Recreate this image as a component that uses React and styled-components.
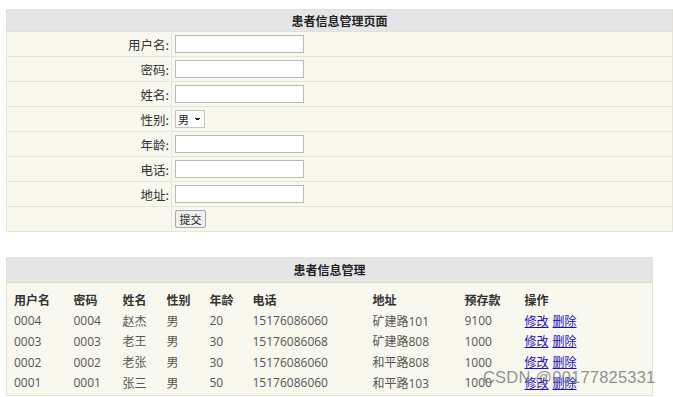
import React from "react";
import styled, { createGlobalStyle } from "styled-components";

const Global = createGlobalStyle`
  html, body { margin: 0; padding: 0; background: #fff; }
  body { font-family: "Open Sans", "Noto Sans CJK SC", sans-serif; font-size: 12px; color: #333; }
`;

const Page = styled.div`
  position: relative;
  width: 673px;
  height: 397px;
  overflow: hidden;
  padding: 9px 0 0 6px;
  box-sizing: border-box;
`;

const FormTable = styled.table`
  width: 667px;
  border-collapse: collapse;
  border: 1px solid #e2e2d2;
  background: #f8f8ee;
  table-layout: fixed;
`;

const TitleCell = styled.th`
  height: 21px;
  padding: 0;
  background: #e5e5e7;
  border: 1px solid #e2e2d2;
  font-family: "Noto Sans CJK SC", sans-serif;
  font-weight: bold;
  font-size: 12px;
  color: #222;
  text-align: center;
`;

const FormRow = styled.tr`
  height: 25px;
`;

const LabelCell = styled.td`
  padding: 0 2px 0 0;
  border: 1px solid #e6e6d6;
  text-align: right;
  font-family: "Noto Sans CJK SC", sans-serif;
  font-size: 12.5px;
  color: #333;
`;

const FieldCell = styled.td`
  padding: 0 0 0 3px;
  border: 1px solid #e6e6d6;
  vertical-align: middle;
`;

const TextInput = styled.input`
  display: block;
  width: 129px;
  height: 18px;
  box-sizing: border-box;
  margin: 0;
  padding: 0 2px;
  border: 1px solid #b9b9b9;
  background: #fff;
  font-size: 12px;
`;

const Select = styled.select`
  display: block;
  height: 18px;
  width: 30px;
  box-sizing: border-box;
  margin: 0;
  padding: 0 0 0 2px;
  border: 1px solid #c4c4c4;
  background: #fff;
  font-family: "Noto Sans CJK SC", sans-serif;
  font-size: 11px;
  color: #222;
  appearance: none;
  background-image: linear-gradient(45deg, transparent 50%, #222 50%), linear-gradient(135deg, #222 50%, transparent 50%);
  background-position: 19px 7px, 22px 7px;
  background-size: 3px 3px, 3px 3px;
  background-repeat: no-repeat;
`;

const Button = styled.button`
  display: block;
  height: 18px;
  width: 31px;
  margin: 0;
  padding: 0;
  border: 1px solid #a9a9a9;
  border-radius: 2px;
  background: #efefef;
  font-family: "Noto Sans CJK SC", sans-serif;
  font-size: 11px;
  color: #222;
`;

const ListTable = styled.table`
  margin-top: 25px;
  width: 646px;
  border-collapse: collapse;
  border: 1px solid #e2e2d2;
  background: #f8f8ee;
  table-layout: fixed;
`;

const ListTitle = styled.th`
  height: 22px;
  padding: 0 0 2px;
  background: #e5e5e7;
  border-bottom: 1px solid #dedece;
  font-family: "Noto Sans CJK SC", sans-serif;
  font-weight: bold;
  font-size: 12px;
  color: #222;
  text-align: center;
`;

const Spacer = styled.tr`
  height: 7px;
`;

const Row = styled.tr`
  height: 20.8px;
`;

const Head = styled.th`
  padding: 0 0 0 7px;
  text-align: left;
  font-family: "Noto Sans CJK SC", sans-serif;
  font-weight: bold;
  font-size: 12px;
  color: #333;
`;

const Cell = styled.td`
  padding: 0 0 0 7px;
  text-align: left;
  font-family: "Open Sans", "Noto Sans CJK SC", sans-serif;
  font-size: 12px;
  color: #555;
  white-space: nowrap;
`;

const LastRow = styled(Row)`
  height: 23px;
  & > td { padding-bottom: 2px; }
`;

const Link = styled.a`
  font-family: "Noto Sans CJK SC", sans-serif;
  color: #1a0dcc;
  text-decoration: underline;
  margin-right: 4px;
`;

const Watermark = styled.div`
  position: absolute;
  left: 483px;
  top: 368px;
  font-family: "Liberation Sans", sans-serif;
  font-size: 16.5px;
  color: rgba(110, 110, 110, 0.75);
  letter-spacing: 0.2px;
  pointer-events: none;
`;

const fields = [
  { label: "用户名:" },
  { label: "密码:" },
  { label: "姓名:" },
  { label: "性别:", select: true },
  { label: "年龄:" },
  { label: "电话:" },
  { label: "地址:" },
];

const cols = [60, 49, 44, 43, 43, 120, 92, 60, 135];
const heads = ["用户名", "密码", "姓名", "性别", "年龄", "电话", "地址", "预存款", "操作"];
const rows = [
  ["0004", "0004", "赵杰", "男", "20", "15176086060", "矿建路101", "9100"],
  ["0003", "0003", "老王", "男", "30", "15176086068", "矿建路808", "1000"],
  ["0002", "0002", "老张", "男", "30", "15176086060", "和平路808", "1000"],
  ["0001", "0001", "张三", "男", "50", "15176086060", "和平路103", "1000"],
];

export default function App() {
  return (
    <Page>
      <Global />
      <FormTable>
        <colgroup>
          <col width={165} />
          <col />
        </colgroup>
        <tbody>
          <tr>
            <TitleCell colSpan={2}>患者信息管理页面</TitleCell>
          </tr>
          {fields.map((f) => (
            <FormRow key={f.label}>
              <LabelCell>{f.label}</LabelCell>
              <FieldCell>
                {f.select ? (
                  <Select defaultValue="男">
                    <option>男</option>
                    <option>女</option>
                  </Select>
                ) : (
                  <TextInput type="text" />
                )}
              </FieldCell>
            </FormRow>
          ))}
          <FormRow>
            <LabelCell />
            <FieldCell>
              <Button type="button">提交</Button>
            </FieldCell>
          </FormRow>
        </tbody>
      </FormTable>

      <ListTable>
        <colgroup>
          {cols.map((w, i) => (
            <col key={i} width={w} />
          ))}
        </colgroup>
        <tbody>
          <tr>
            <ListTitle colSpan={9}>患者信息管理</ListTitle>
          </tr>
          <Spacer>
            <td colSpan={9} />
          </Spacer>
          <Row>
            {heads.map((h) => (
              <Head key={h}>{h}</Head>
            ))}
          </Row>
          {rows.map((r, idx) => {
            const R = idx === rows.length - 1 ? LastRow : Row;
            return (
              <R key={r[0]}>
                {r.map((v, i) => (
                  <Cell key={i}>{v}</Cell>
                ))}
                <Cell>
                  <Link href="#">修改</Link>
                  <Link href="#">删除</Link>
                </Cell>
              </R>
            );
          })}
        </tbody>
      </ListTable>
      <Watermark>CSDN @00177825331</Watermark>
    </Page>
  );
}
